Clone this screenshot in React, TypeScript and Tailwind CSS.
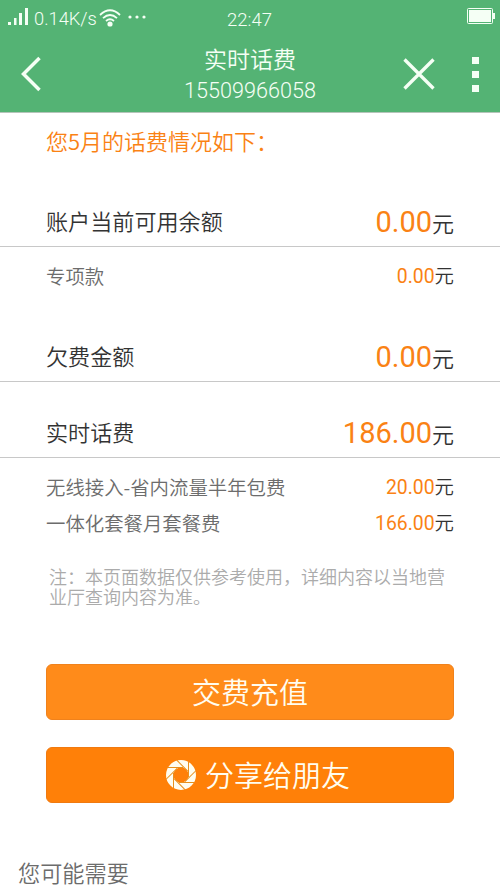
import React from 'react';

type RowProps = {
  label: string;
  amount: string;
};

const BalanceRow: React.FC<RowProps> = ({ label, amount }) => (
  <div className="flex items-center justify-between h-[50px] px-[46px] border-b border-[#c8c8c8]">
    <span className="pb-0.5 text-[22.1px] text-[#333]">{label}</span>
    <span className="flex items-baseline pt-[3px] text-[22px] text-[#333]">
      <span className="font-[Roboto] font-normal text-[29px] text-[#fa8214]">{amount}</span>元
    </span>
  </div>
);

const DetailRow: React.FC<RowProps> = ({ label, amount }) => (
  <div className="flex items-center justify-between h-9 px-[46px] text-[19.4px]">
    <span className="text-[#6c6c6c]">{label}</span>
    <span className="flex items-baseline text-[#333]">
      <span className="font-[Roboto] font-normal text-[#fa8214]">{amount}</span>元
    </span>
  </div>
);

const BLADES = [0, 45, 90, 135, 180, 225, 270, 315];

const Aperture: React.FC = () => (
  <svg viewBox="-16 -16 32 32" className="w-8 h-8">
    <circle r="11.3" fill="none" stroke="#fffdf0" strokeWidth="7.4" />
    {BLADES.map(angle => (
      <path key={angle} d="M2 -7.500H-13.500" transform={`rotate(${angle})`} stroke="#e8901c" strokeWidth="1" />
    ))}
  </svg>
);

const StatusBar: React.FC = () => (
  <div className="flex items-center justify-between h-9 pl-2 pr-[5px]">
    <div className="flex items-center w-[198px]">
      <svg viewBox="0 0 20 18" className="-mt-0.5 w-5 h-[18px]" fill="currentColor">
        <path d="M0 14h3v3H0zM6 10h2.5v7H6zM11 5h3v12h-3zM17 0h3v17h-3z" />
      </svg>
      <span className="ml-[6px] pt-0.5 font-[Roboto] font-light text-[18.3px] leading-none">0.14K/s</span>
      <svg viewBox="0 0 22 18" className="ml-[2px] w-[22px] h-[18px]" fill="none" stroke="currentColor" strokeWidth="1.8">
        <path d="M1 6Q11 -3.5 21 6M4 9.2Q11 2.8 18 9.2M7 12Q11 8.6 15 12" />
        <circle cx="11" cy="15" r="2.6" fill="currentColor" stroke="none" />
      </svg>
      <svg viewBox="0 0 18 4" className="ml-[7px] -mt-0.5 w-[18px] h-1" fill="currentColor">
        <circle cx="2" cy="2" r="1.6" />
        <circle cx="9" cy="2" r="1.6" />
        <circle cx="16" cy="2" r="1.6" />
      </svg>
    </div>
    <span className="pt-1 font-[Roboto] font-light text-[18.5px] leading-none">22:47</span>
    <div className="flex w-[202px] items-center justify-end -mt-1">
      <svg viewBox="0 0 28 16" className="w-7 h-4">
        <rect x="0.5" y="0.5" width="25" height="15" rx="1" fill="none" stroke="currentColor" />
        <rect x="2" y="2" width="22" height="12" fill="currentColor" />
        <path d="M26 5h2v6h-2z" fill="currentColor" />
      </svg>
    </div>
  </div>
);

const App: React.FC = () => {
  return (
    <div className="w-[500px] h-[889px] overflow-hidden bg-white font-[350] font-['Noto_Sans_CJK_SC',sans-serif]">
      <header className="h-[113px] bg-[#54b374] text-[#f5fff5] border-b border-[#b5c4ba]">
        <StatusBar />
        <div className="flex items-center h-[76px]">
          <div className="w-[150px] pl-[21px]">
            <svg viewBox="0 0 20 36" className="w-5 h-9" fill="none" stroke="currentColor" strokeWidth="3.5">
              <path d="M18.500 2L2.500 18L18.500 34" />
            </svg>
          </div>
          <div className="w-[200px] flex flex-col items-center">
            <h1 className="text-[23px] leading-[32px]">实时话费</h1>
            <p className="pt-px font-[Roboto] font-light text-[21.6px] leading-[31px]">15509966058</p>
          </div>
          <div className="w-[150px] flex items-center pl-[53px]">
            <svg viewBox="0 0 32 32" className="w-8 h-8" fill="none" stroke="currentColor" strokeWidth="3.3">
              <path d="M1.500 1.500L30.500 30.500M30.500 1.500L1.500 30.500" />
            </svg>
            <svg viewBox="0 0 7 35" className="ml-[37px] w-[7px] h-[35px]" fill="currentColor">
              <path d="M0 0h7v7H0zM0 14h7v7H0zM0 28h7v7H0z" />
            </svg>
          </div>
        </div>
      </header>

      <main>
        <p className="h-[84px] pt-[11px] px-[46px] text-[22px] leading-8 text-[#fa8214]">您5月的话费情况如下：</p>

        <BalanceRow label="账户当前可用余额" amount="0.00" />
        <div className="pt-[11px] pb-[38px]">
          <DetailRow label="专项款" amount="0.00" />
        </div>

        <BalanceRow label="欠费金额" amount="0.00" />
        <div className="h-[26px]" />

        <BalanceRow label="实时话费" amount="186.00" />
        <div className="pt-[11px]">
          <DetailRow label="无线接入-省内流量半年包费" amount="20.00" />
          <DetailRow label="一体化套餐月套餐费" amount="166.00" />
        </div>

        <p className="mt-[25px] w-[450px] pl-[49px] text-[18px] leading-5 text-[#ababab]">
          注：本页面数据仅供参考使用，详细内容以当地营业厅查询内容为准。
        </p>

        <div className="mt-[58px] px-[46px] flex flex-col gap-[27px] text-[29px] text-[#fffdf0]">
          <button className="h-14 rounded-md bg-[#ff8b1a] border border-[#f0821c]">交费充值</button>
          <button className="h-14 pl-[15px] rounded-md bg-[#ff8008] border border-[#f07a10] flex items-center justify-center gap-2">
            <Aperture />
            分享给朋友
          </button>
        </div>

        <h2 className="mt-[53px] pl-[18px] text-[22.2px] leading-8 text-[#6c6c6c]">您可能需要</h2>
      </main>
    </div>
  );
};

export default App;
